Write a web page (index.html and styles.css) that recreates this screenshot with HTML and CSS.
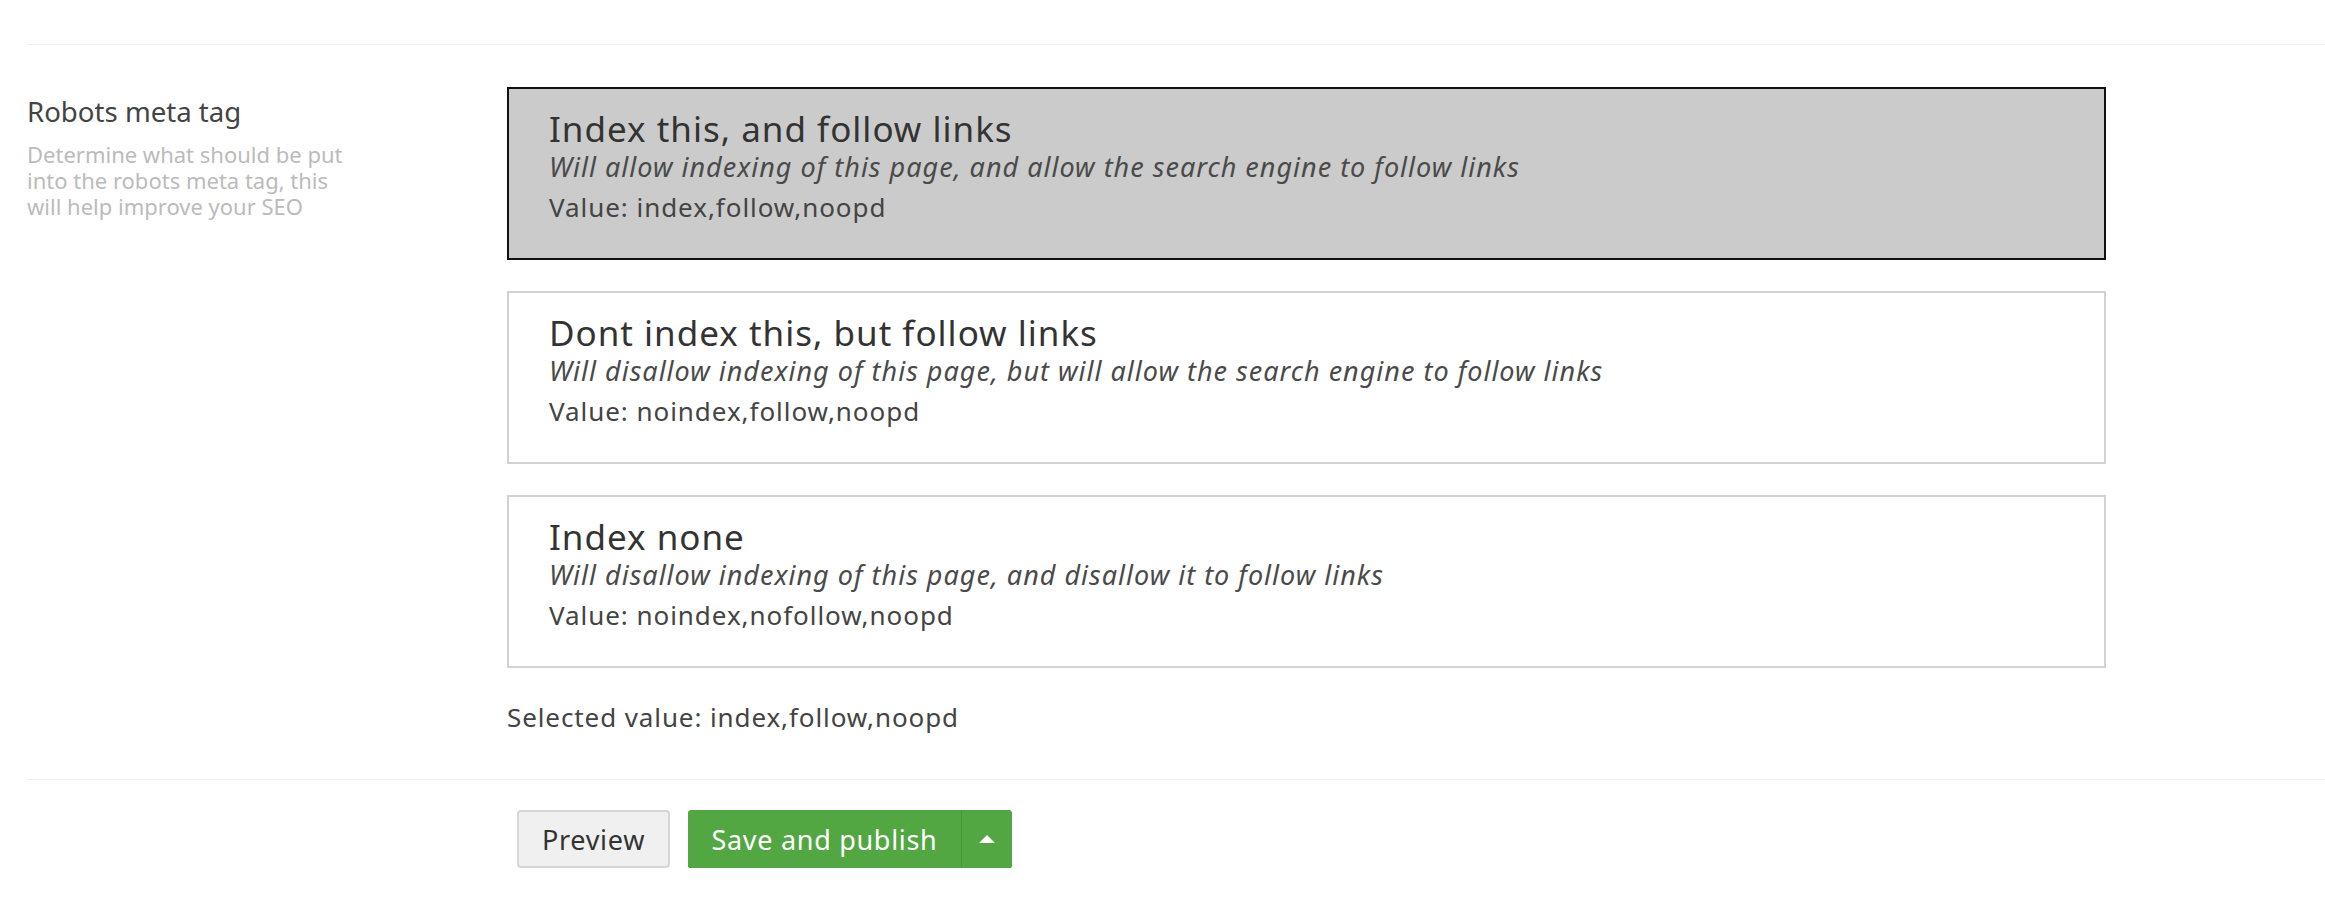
FILE: index.html
```html
<!DOCTYPE html>
<html>
<head>
<meta charset="utf-8">
<link rel="stylesheet" href="styles.css">
</head>
<body>
<div class="page">
  <div class="field">
    <div class="label-col">
      <div class="label">Robots meta tag</div>
      <div class="help">Determine what should be put into the robots meta tag, this will help improve your SEO</div>
    </div>
    <div class="control-col">
      <div class="option selected">
        <div class="opt-title">Index this, and follow links</div>
        <div class="opt-desc">Will allow indexing of this page, and allow the search engine to follow links</div>
        <div class="opt-value">Value: index,follow,noopd</div>
      </div>
      <div class="option">
        <div class="opt-title">Dont index this, but follow links</div>
        <div class="opt-desc">Will disallow indexing of this page, but will allow the search engine to follow links</div>
        <div class="opt-value">Value: noindex,follow,noopd</div>
      </div>
      <div class="option">
        <div class="opt-title">Index none</div>
        <div class="opt-desc">Will disallow indexing of this page, and disallow it to follow links</div>
        <div class="opt-value">Value: noindex,nofollow,noopd</div>
      </div>
      <div class="selected-value">Selected value: index,follow,noopd</div>
    </div>
  </div>
  <div class="actions">
    <button class="btn btn-preview">Preview</button>
    <div class="btn-group">
      <button class="btn btn-save">Save and publish</button>
      <button class="btn btn-caret"><span class="caret"></span></button>
    </div>
  </div>
</div>
</body>
</html>
```
FILE: styles.css
```css
html, body {
  margin: 0;
  padding: 0;
  background: #fff;
}
body {
  font-family: "Noto Sans", "Open Sans", sans-serif;
  color: #333;
}
.page {
  padding-top: 44px;
  padding-left: 27px;
}
.field {
  display: flex;
  border-top: 1px solid #f0f0f0;
  border-bottom: 1px solid #f0f0f0;
  padding-top: 42px;
  padding-bottom: 44px;
}
.label-col {
  width: 480px;
  flex: none;
}
.label {
  margin-top: 6px;
  font-size: 27.6px;
  line-height: 36px;
  color: #444;
}
.help {
  margin-top: 12px;
  width: 330px;
  font-size: 22px;
  line-height: 26px;
  color: #bbb;
}
.control-col {
  width: 1599px;
  flex: none;
}
.option {
  box-sizing: border-box;
  height: 173px;
  border: 2px solid #d2d2d2;
  padding: 20px 40px 0 40px;
  margin-bottom: 31px;
  background: #fff;
}
.option.selected {
  background: #cbcbcb;
  border-color: #111;
}
.opt-title {
  font-size: 35px;
  line-height: 40px;
  letter-spacing: 1px;
  color: #333;
  font-weight: 400;
}
.opt-desc {
  font-size: 27px;
  line-height: 36px;
  letter-spacing: 1px;
  font-style: italic;
  color: #4a4a4a;
}
.opt-value {
  margin-top: 4px;
  font-size: 26px;
  line-height: 36px;
  letter-spacing: 0.95px;
  color: #444;
}
.selected-value {
  margin-top: 3px;
  font-size: 26px;
  line-height: 36px;
  letter-spacing: 0.9px;
  color: #444;
}
.actions {
  display: flex;
  gap: 18px;
  padding-top: 30px;
  padding-left: 490px;
}
.btn {
  font-family: "Noto Sans", "Open Sans", sans-serif;
  font-size: 27px;
  letter-spacing: 0.7px;
  height: 58px;
  margin: 0;
  padding: 0;
  cursor: pointer;
}
.btn-preview {
  width: 153px;
  background: #f0f0f0;
  border: 2px solid #d6d6d6;
  border-radius: 4px;
  color: #333;
}
.btn-group {
  display: flex;
  height: 58px;
  border-radius: 4px;
  overflow: hidden;
  background: #52a743;
  box-shadow: 0 1px 0 #3f8d33;
}
.btn-save {
  width: 274px;
  background: #52a743;
  border: none;
  border-right: 1px solid #47973a;
  color: #fff;
}
.btn-caret {
  width: 50px;
  background: #52a743;
  border: none;
  display: flex;
  align-items: center;
  justify-content: center;
}
.caret {
  width: 0;
  height: 0;
  border-left: 8px solid transparent;
  border-right: 8px solid transparent;
  border-bottom: 8px solid #fff;
}
```
